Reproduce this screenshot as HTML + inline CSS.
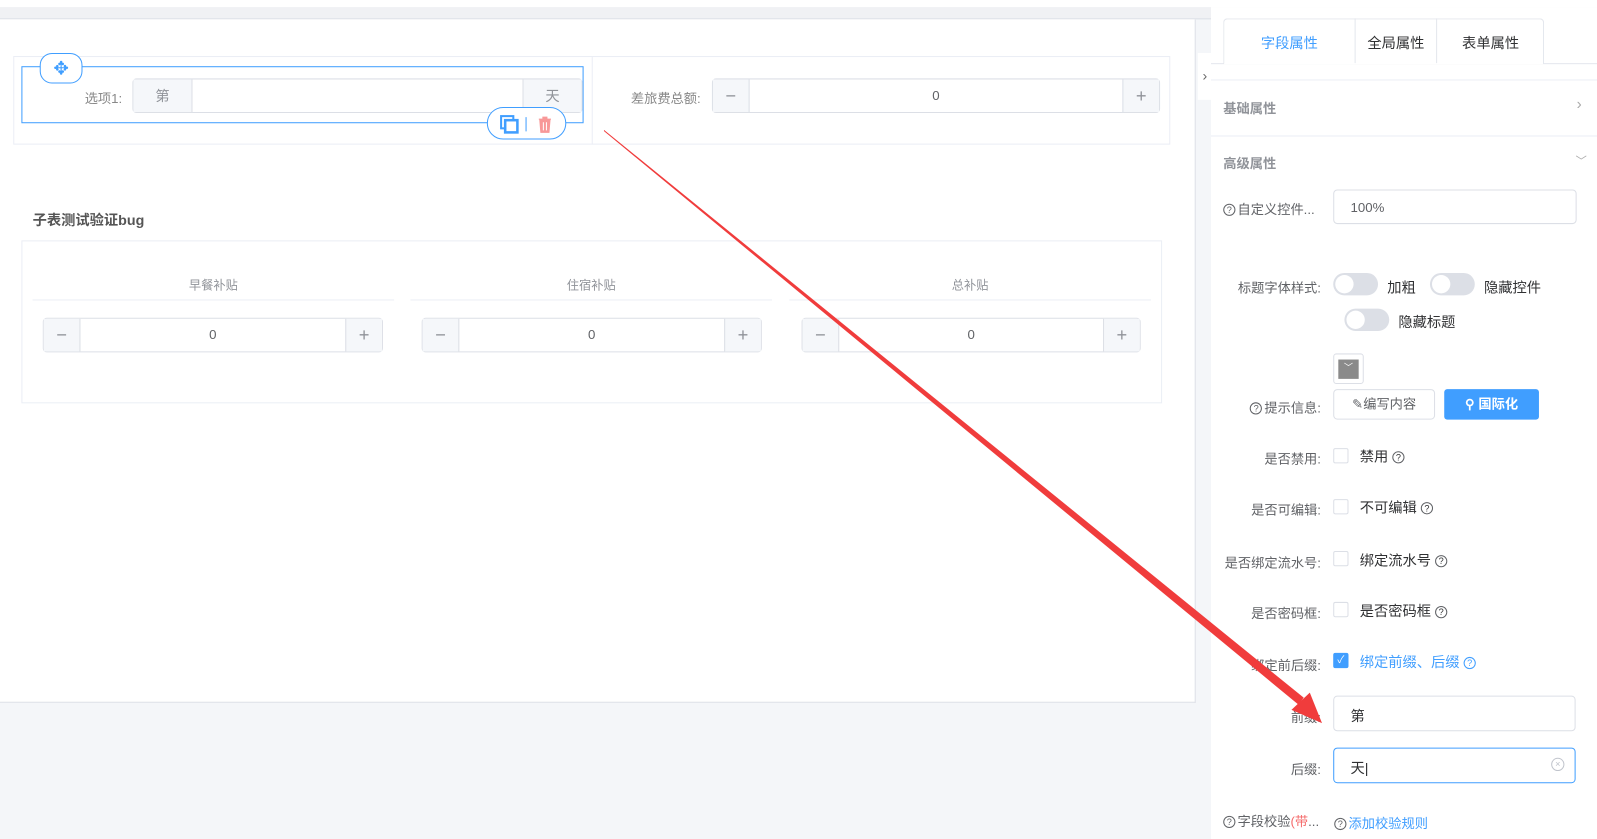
<!DOCTYPE html>
<html><head><meta charset="utf-8"><style>
*{box-sizing:border-box;margin:0;padding:0}
body{width:1597px;height:824px;overflow:hidden;background:#f4f6f9;font-family:"Liberation Sans","Noto Sans CJK SC",sans-serif;font-size:14px;color:#606266;position:relative}
#w{position:absolute;left:0;top:0;width:1568px;height:809px;transform:scale(1.0185);transform-origin:0 0}
.a{position:absolute}
.box{position:absolute;border:1px solid #dcdfe6;border-radius:4px;background:#fff}
.lbl{position:absolute;font-size:13px;color:#606266;text-align:right}
.cb{position:absolute;width:15px;height:15px;border:1px solid #dcdfe6;border-radius:2px;background:#fff}
.q{display:inline-block;width:12px;height:12px;border:1.3px solid #606266;border-radius:50%;font-size:9px;line-height:10px;text-align:center;vertical-align:1px;margin-left:4px}
.sw{position:absolute;width:44px;height:22px;border-radius:11px;background:#dcdfe6}
.sw::after{content:"";position:absolute;left:2px;top:2px;width:18px;height:18px;border-radius:50%;background:#fff}
.num{position:absolute;height:34px;border:1px solid #dcdfe6;border-radius:4px;background:#fff;font-size:13px}
.num .m,.num .p{position:absolute;top:0;width:36px;height:32px;background:#f5f7fa;color:#909399;text-align:center;line-height:32px;font-size:18px;font-weight:300}
.num .m{left:0;border-right:1px solid #dcdfe6}.num .p{right:0;border-left:1px solid #dcdfe6}
.num .v{position:absolute;left:36px;right:36px;top:0;line-height:32px;text-align:center}
</style></head><body><div id="w">
<div class="a" style="left:0;top:0;width:1597px;height:7px;background:#fff"></div>
<div class="a" style="left:0;top:7px;width:1189px;height:12px;background:#f0f1f4;border-bottom:1px solid #dcdfe6"></div>
<div class="a" style="left:0;top:19px;width:1174px;height:671px;background:#fff;border-right:1px solid #dcdfe6;border-bottom:1px solid #dcdfe6"></div>
<div class="a" style="left:13px;top:55px;width:1136px;height:87px;border:1px solid #ebeef5"></div>
<div class="a" style="left:581px;top:55px;width:1px;height:87px;background:#ebeef5"></div>
<div class="a" style="left:21px;top:65px;width:552px;height:56px;border:1px solid #409eff"></div>
<div class="lbl" style="left:60px;top:86px;width:60px;color:#888">选项1:</div>
<div class="box" style="left:130px;top:77px;width:442px;height:34px"></div>
<div class="a" style="left:131px;top:78px;width:58px;height:32px;background:#f5f7fa;border-right:1px solid #dcdfe6;text-align:center;line-height:32px;color:#909399">第</div>
<div class="a" style="left:513px;top:78px;width:58px;height:32px;background:#f5f7fa;border-left:1px solid #dcdfe6;text-align:center;line-height:32px;color:#909399">天</div>
<div class="a" style="left:39px;top:52px;width:42px;height:30px;border:1px solid #409eff;border-radius:12px;background:#fff;text-align:center;line-height:28px;color:#409eff;font-size:18px">✥</div>
<div class="a" style="left:478px;top:105px;width:78px;height:32px;border:1px solid #409eff;border-radius:16px;background:#fff">
<svg class="a" style="left:11px;top:6px" width="20" height="20"><rect x="2" y="2" width="12" height="12" fill="none" stroke="#409eff" stroke-width="2"/><rect x="6" y="6" width="12" height="12" fill="#fff" stroke="#409eff" stroke-width="2.5"/></svg>
<div class="a" style="left:37px;top:9px;width:1px;height:14px;background:#409eff"></div>
<svg class="a" style="left:47px;top:6px" width="18" height="20"><path d="M3 5h12M7 5V3h4v2M4 6h10l-1 12H5z" fill="#f89898" stroke="#f89898"/><path d="M7.5 8v8M10.5 8v8" stroke="#fff"/></svg>
</div>
<div class="lbl" style="left:600px;top:86px;width:88px;color:#888">差旅费总额:</div>
<div class="num" style="left:699px;top:77px;width:440px"><div class="m">−</div><div class="v">0</div><div class="p">+</div></div>
<div class="a" style="left:32px;top:206px;font-size:14px;font-weight:bold;color:#555">子表测试验证bug</div>
<div class="a" style="left:21px;top:236px;width:1120px;height:160px;border:1px solid #ebeef5"></div>
<div class="a" style="left:32px;top:271px;width:355px;text-align:center;font-size:12px;color:#909399">早餐补贴</div>
<div class="a" style="left:403px;top:271px;width:355px;text-align:center;font-size:12px;color:#909399">住宿补贴</div>
<div class="a" style="left:775px;top:271px;width:355px;text-align:center;font-size:12px;color:#909399">总补贴</div>
<div class="a" style="left:32px;top:294px;width:355px;height:1px;background:#ebeef5"></div>
<div class="a" style="left:403px;top:294px;width:355px;height:1px;background:#ebeef5"></div>
<div class="a" style="left:775px;top:294px;width:355px;height:1px;background:#ebeef5"></div>
<div class="num" style="left:42px;top:312px;width:334px"><div class="m">−</div><div class="v">0</div><div class="p">+</div></div>
<div class="num" style="left:414px;top:312px;width:334px"><div class="m">−</div><div class="v">0</div><div class="p">+</div></div>
<div class="num" style="left:787px;top:312px;width:333px"><div class="m">−</div><div class="v">0</div><div class="p">+</div></div>
<div class="a" style="left:1189px;top:7px;width:408px;height:817px;background:#fff"></div>
<div class="a" style="left:1176px;top:52px;width:14px;height:46px;background:#fff;color:#666;font-size:14px;line-height:44px;text-align:center">›</div>
<div class="a" style="left:1189px;top:62px;width:408px;height:1px;background:#e4e7ed"></div>
<div class="a" style="left:1201px;top:18px;width:315px;height:45px;border:1px solid #e4e7ed;border-bottom:none;border-radius:4px 4px 0 0;background:#fff"></div>
<div class="a" style="left:1330px;top:18px;width:1px;height:44px;background:#e4e7ed"></div>
<div class="a" style="left:1410px;top:18px;width:1px;height:44px;background:#e4e7ed"></div>
<div class="a" style="left:1202px;top:62px;width:128px;height:1px;background:#fff"></div>
<div class="a" style="left:1202px;top:32px;width:128px;text-align:center;color:#409eff">字段属性</div>
<div class="a" style="left:1331px;top:32px;width:79px;text-align:center;color:#303133">全局属性</div>
<div class="a" style="left:1411px;top:32px;width:105px;text-align:center;color:#303133">表单属性</div>
<div class="a" style="left:1189px;top:78px;width:408px;height:1px;background:#ebeef5"></div>
<div class="a" style="left:1201px;top:96px;font-weight:bold;color:#909399;font-size:13px">基础属性</div>
<div class="a" style="left:1548px;top:94px;color:#aaa;font-size:15px">›</div>
<div class="a" style="left:1189px;top:133px;width:408px;height:1px;background:#ebeef5"></div>
<div class="a" style="left:1201px;top:150px;font-weight:bold;color:#909399;font-size:13px">高级属性</div>
<div class="a" style="left:1547px;top:150px;color:#aaa;font-size:11px">﹀</div>
<div class="lbl" style="left:1201px;top:195px;width:100px;text-align:left"><span class="q" style="margin:0 2px 0 0">?</span>自定义控件...</div>
<div class="box" style="left:1309px;top:186px;width:239px;height:34px;padding:9px 16px;font-size:13px">100%</div>
<div class="lbl" style="left:1195px;top:272px;width:102px">标题字体样式:</div>
<div class="sw" style="left:1309px;top:268px"></div><div class="a" style="left:1362px;top:272px;color:#303133">加粗</div>
<div class="sw" style="left:1404px;top:268px"></div><div class="a" style="left:1457px;top:272px;color:#303133">隐藏控件</div>
<div class="sw" style="left:1320px;top:303px"></div><div class="a" style="left:1373px;top:306px;color:#303133">隐藏标题</div>
<div class="box" style="left:1309px;top:347px;width:30px;height:30px;border-radius:3px"><div class="a" style="left:4px;top:5px;width:20px;height:19px;background:#8a8a8a;color:#fff;font-size:9px;text-align:center;line-height:16px">﹀</div></div>
<div class="lbl" style="left:1195px;top:390px;width:102px"><span class="q" style="margin:0 2px 0 0">?</span>提示信息:</div>
<div class="box" style="left:1309px;top:382px;width:100px;height:30px;text-align:center;line-height:28px;font-size:13px">✎编写内容</div>
<div class="a" style="left:1418px;top:382px;width:93px;height:30px;background:#409eff;border-radius:3px;color:#fff;text-align:center;line-height:30px;font-size:13px;font-weight:bold">⚲ 国际化</div>
<div class="lbl" style="left:1195px;top:440px;width:102px">是否禁用:</div><div class="cb" style="left:1309px;top:440px"></div><div class="a" style="left:1335px;top:438px;color:#303133">禁用<span class="q">?</span></div>
<div class="lbl" style="left:1195px;top:490px;width:102px">是否可编辑:</div><div class="cb" style="left:1309px;top:490px"></div><div class="a" style="left:1335px;top:488px;color:#303133">不可编辑<span class="q">?</span></div>
<div class="lbl" style="left:1195px;top:542px;width:102px">是否绑定流水号:</div><div class="cb" style="left:1309px;top:541px"></div><div class="a" style="left:1335px;top:540px;color:#303133">绑定流水号<span class="q">?</span></div>
<div class="lbl" style="left:1195px;top:592px;width:102px">是否密码框:</div><div class="cb" style="left:1309px;top:591px"></div><div class="a" style="left:1335px;top:590px;color:#303133">是否密码框<span class="q">?</span></div>
<div class="lbl" style="left:1195px;top:643px;width:102px">绑定前后缀:</div><div class="cb" style="left:1309px;top:641px;background:#409eff;border-color:#409eff;color:#fff;font-size:10px;text-align:center;line-height:13px">✓</div><div class="a" style="left:1335px;top:640px;color:#409eff">绑定前缀、后缀<span class="q" style="border-color:#409eff;color:#409eff">?</span></div>
<div class="lbl" style="left:1195px;top:694px;width:102px">前缀:</div>
<div class="box" style="left:1309px;top:683px;width:238px;height:35px;padding:9px 16px;color:#303133">第</div>
<div class="lbl" style="left:1195px;top:745px;width:102px">后缀:</div>
<div class="box" style="left:1309px;top:734px;width:238px;height:35px;padding:9px 16px;color:#303133;border-color:#409eff">天|<span class="a" style="right:10px;top:9px;width:13px;height:13px;border:1px solid #c0c4cc;border-radius:50%;font-size:9px;line-height:11px;text-align:center;color:#c0c4cc">×</span></div>
<div class="lbl" style="left:1201px;top:796px;width:110px;text-align:left"><span class="q" style="margin:0 2px 0 0">?</span>字段校验<span style="color:#f56c6c">(带</span>...</div>
<div class="a" style="left:1310px;top:798px;font-size:13px;color:#409eff"><span class="q" style="margin:0 2px 0 0;border-color:#606266;color:#606266">?</span>添加校验规则</div>
<svg class="a" style="left:0;top:0" width="1597" height="824"><polygon points="593,127.5 1280,685 1275,692 593,128.8" fill="#f03c3c"/><polygon points="1298,710 1268,697 1286,680" fill="#f03c3c"/></svg>
</div></body></html>
